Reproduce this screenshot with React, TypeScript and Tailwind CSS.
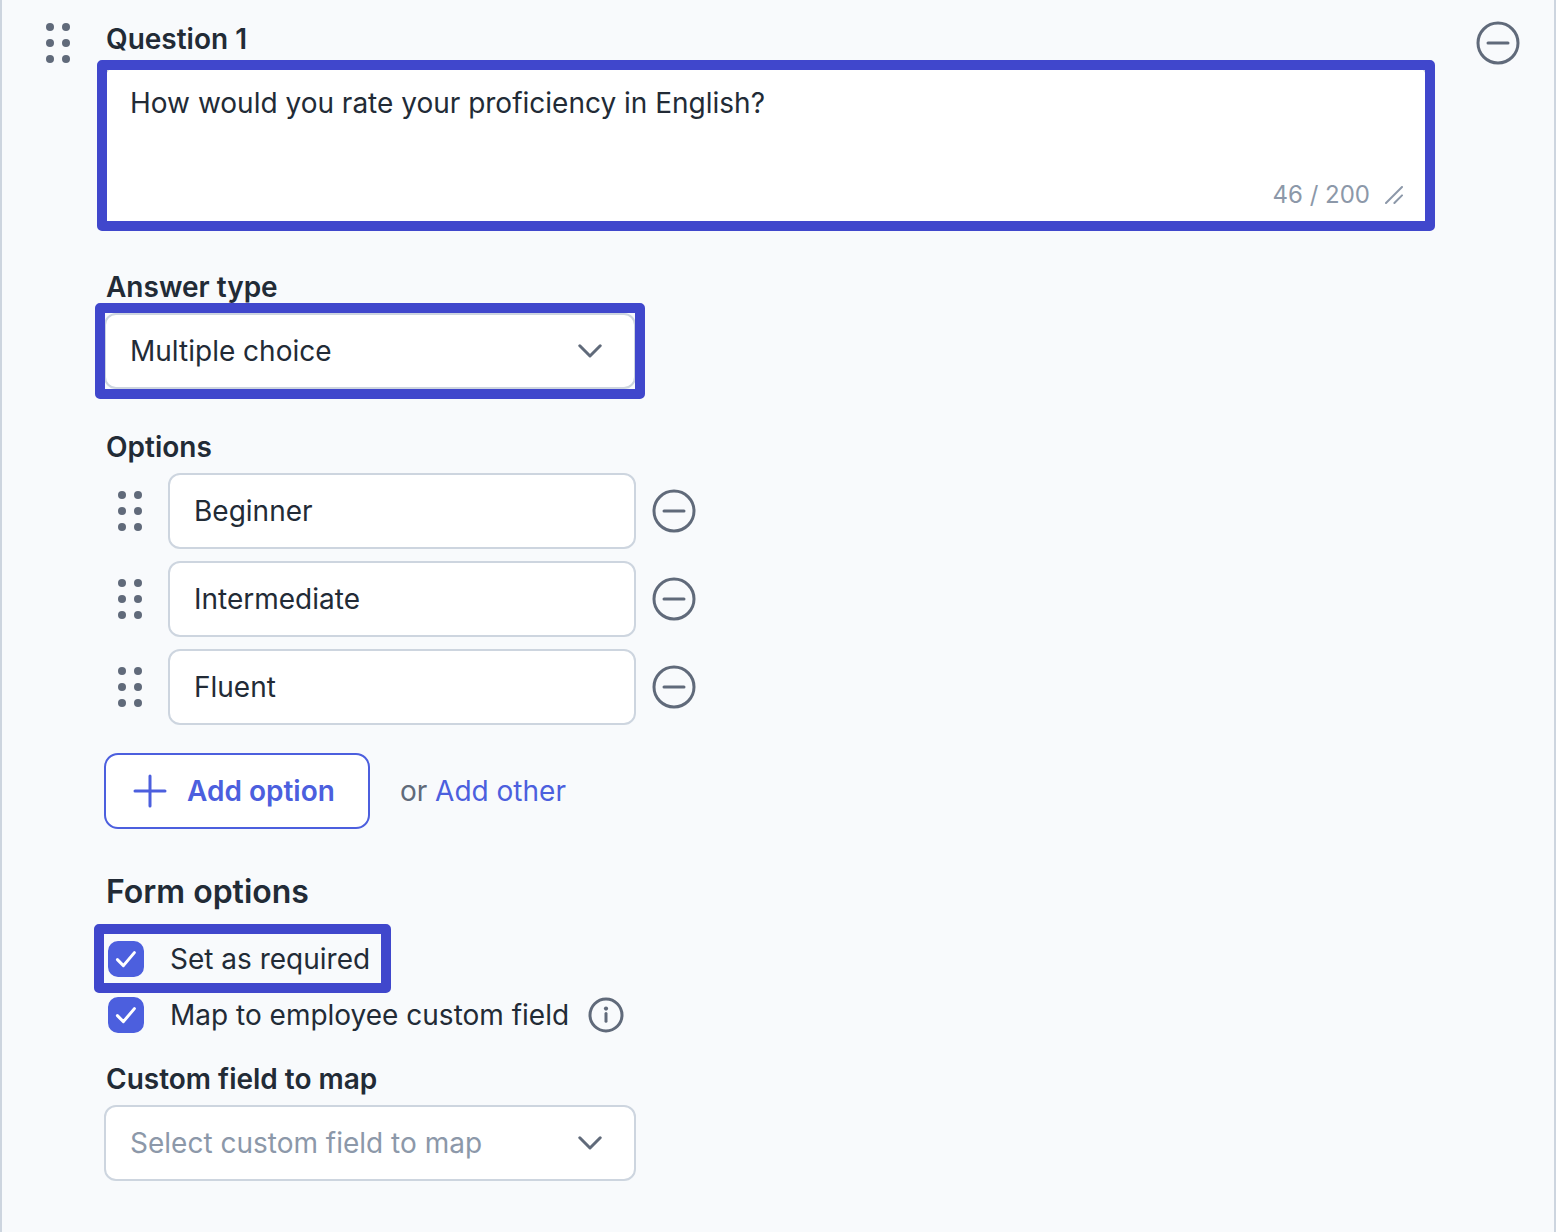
import { useState } from "react";
import type { ReactNode } from "react";

function DragHandle({ label }: { label: string }) {
  return (
    <button type="button" aria-label={label} className="h-11 w-6 shrink-0 cursor-grab text-[#606a7a]">
      <svg viewBox="0 0 24 44" className="h-11 w-6" fill="currentColor" aria-hidden="true">
        <circle cx="4" cy="6" r="4" />
        <circle cx="20" cy="6" r="4" />
        <circle cx="4" cy="22" r="4" />
        <circle cx="20" cy="22" r="4" />
        <circle cx="4" cy="38" r="4" />
        <circle cx="20" cy="38" r="4" />
      </svg>
    </button>
  );
}

function RemoveButton({ label }: { label: string }) {
  return (
    <button type="button" aria-label={label} className="size-11 shrink-0 text-[#606a7a]">
      <svg viewBox="0 0 44 44" className="size-11" fill="none" stroke="currentColor" strokeWidth="3" strokeLinecap="round" aria-hidden="true">
        <circle cx="22" cy="22" r="20" />
        <path d="M12 22H32" />
      </svg>
    </button>
  );
}

function Chevron() {
  return (
    <svg viewBox="0 0 24 14" className="pointer-events-none absolute top-[31px] right-[34px] h-3.5 w-6 text-[#606a7a]" fill="none" stroke="currentColor" strokeWidth="3" strokeLinecap="round" strokeLinejoin="round" aria-hidden="true">
      <path d="M1.8 1.8L12 12L22.2 1.8" />
    </svg>
  );
}

function FieldLabel({ htmlFor, children }: { htmlFor: string; children: ReactNode }) {
  return (
    <label htmlFor={htmlFor} className="mb-1.5 ml-0.5 block text-[28px] leading-10 font-semibold">
      {children}
    </label>
  );
}

function Tick({ label, id }: { label: string; id: string }) {
  const [checked, setChecked] = useState(true);
  return (
    <label htmlFor={id} className="flex items-center gap-[26px]">
      <span className="relative block size-9">
        <input
          id={id}
          type="checkbox"
          checked={checked}
          onChange={(e) => setChecked(e.target.checked)}
          className="block size-9 appearance-none rounded-[10px] border-2 border-[#cdd5df] bg-white checked:border-[#4c5fde] checked:bg-[#4c5fde]"
        />
        <svg viewBox="0 0 36 36" className="pointer-events-none absolute inset-0 size-9" fill="none" stroke="white" strokeWidth="3" strokeLinecap="round" strokeLinejoin="round" aria-hidden="true">
          <path d="M9.4 18.6L15.4 24.6L26.4 11.6" />
        </svg>
      </span>
      <span>{label}</span>
    </label>
  );
}

const initialOptions = ["Beginner", "Intermediate", "Fluent"];

export default function App() {
  const [options, setOptions] = useState(initialOptions);

  return (
    <main className="flex min-h-screen items-start border-x-2 border-[#cdd5df] bg-[#f8fafc] pt-[19px] pr-[34px] pb-12 pl-11 font-['Inter',sans-serif] text-[28px] leading-10 text-[#222b36]">
      <div className="mt-0.5 mr-[34px] h-11">
        <DragHandle label="Reorder question 1" />
      </div>

      <form className="min-w-0 flex-1" onSubmit={(e) => e.preventDefault()}>
        <FieldLabel htmlFor="question">Question 1</FieldLabel>
        <div className="relative mb-[38px]">
          <textarea
            id="question"
            maxLength={200}
            defaultValue="How would you rate your proficiency in English?"
            className="block h-[164px] w-full resize-none rounded-xl border-2 border-[#cdd5df] bg-white px-6 pt-4 pb-14 outline-none"
          />
          <div className="pointer-events-none absolute right-[25px] bottom-4 flex items-center gap-[15px] text-2xl leading-9 text-[#8c98a9]">
            <span>46 / 200</span>
            <svg viewBox="0 0 18 18" className="size-[18px]" fill="none" stroke="currentColor" strokeWidth="2" strokeLinecap="round" aria-hidden="true">
              <path d="M1 17L17 1M9.4 17L17 9.4" />
            </svg>
          </div>
          <div className="pointer-events-none absolute -inset-x-[7px] -top-[5px] -bottom-0.5 rounded-[5px] border-10 border-[#4047cc]" />
        </div>

        <FieldLabel htmlFor="answer-type">Answer type</FieldLabel>
        <div className="relative mb-[38px] max-w-[532px]">
          <select id="answer-type" className="block h-[76px] w-full appearance-none rounded-xl border-2 border-[#cdd5df] bg-white pr-16 pl-6 outline-none">
            <option>Multiple choice</option>
            <option>Short text</option>
          </select>
          <Chevron />
          <div className="pointer-events-none absolute -inset-x-[9px] -inset-y-2.5 rounded-[5px] border-10 border-[#4047cc]" />
        </div>

        <fieldset className="mb-7">
          <legend className="mb-1.5 ml-0.5 font-semibold">Options</legend>
          <ul className="flex flex-col gap-3">
            {options.map((option, i) => (
              <li key={i} className="flex items-center pl-3.5">
                <DragHandle label={"Reorder " + option} />
                <input
                  type="text"
                  aria-label={"Option " + (i + 1)}
                  value={option}
                  onChange={(e) => setOptions(options.map((o, j) => (j === i ? e.target.value : o)))}
                  className="mr-4 ml-[26px] h-[76px] w-full max-w-[468px] min-w-0 rounded-xl border-2 border-[#cdd5df] bg-white px-6 outline-none"
                />
                <RemoveButton label={"Remove " + option} />
              </li>
            ))}
          </ul>
        </fieldset>

        <div className="mb-[38px] flex items-center gap-[30px]">
          <button
            type="button"
            onClick={() => setOptions([...options, ""])}
            className="flex h-[76px] items-center gap-5 rounded-[14px] border-2 border-[#4c5fde] bg-white pr-[33px] pl-[27px] font-semibold text-[#4c5fde]"
          >
            <svg viewBox="0 0 34 34" className="size-[34px]" fill="none" stroke="currentColor" strokeWidth="3" strokeLinecap="round" aria-hidden="true">
              <path d="M2 17H32M17 2V32" />
            </svg>
            Add option
          </button>
          <p className="text-[#606a7a]">
            or{" "}
            <a href="#add-other" className="text-[#4c5fde]">
              Add other
            </a>
          </p>
        </div>

        <h2 className="mb-3.5 ml-0.5 text-[32px] leading-[50px] font-semibold">Form options</h2>
        <div className="mb-4 flex flex-col items-start">
          <div className="relative flex h-14 items-center px-1">
            <Tick id="required" label="Set as required" />
            <div className="pointer-events-none absolute -top-[7px] -right-[17px] -bottom-1.5 -left-2.5 rounded-[5px] border-10 border-[#4047cc]" />
          </div>
          <div className="flex h-14 items-center gap-[19px] px-1">
            <Tick id="map-field" label="Map to employee custom field" />
            <button type="button" aria-label="About mapping to a custom field" className="size-9 text-[#606a7a]">
              <svg viewBox="0 0 36 36" className="size-9" fill="none" stroke="currentColor" strokeWidth="3" strokeLinecap="round" aria-hidden="true">
                <circle cx="18" cy="18" r="16" />
                <path d="M18 16.5V24.2" />
                <circle cx="18" cy="11.6" r="2.1" fill="currentColor" stroke="none" />
              </svg>
            </button>
          </div>
        </div>

        <FieldLabel htmlFor="custom-field">Custom field to map</FieldLabel>
        <div className="relative max-w-[532px]">
          <select id="custom-field" defaultValue="" className="block h-[76px] w-full appearance-none rounded-xl border-2 border-[#cdd5df] bg-white pr-16 pl-6 text-[#8c98a9] outline-none">
            <option value="">Select custom field to map</option>
          </select>
          <Chevron />
        </div>
      </form>

      <div className="mt-0.5 ml-12 h-11">
        <RemoveButton label="Remove question 1" />
      </div>
    </main>
  );
}
